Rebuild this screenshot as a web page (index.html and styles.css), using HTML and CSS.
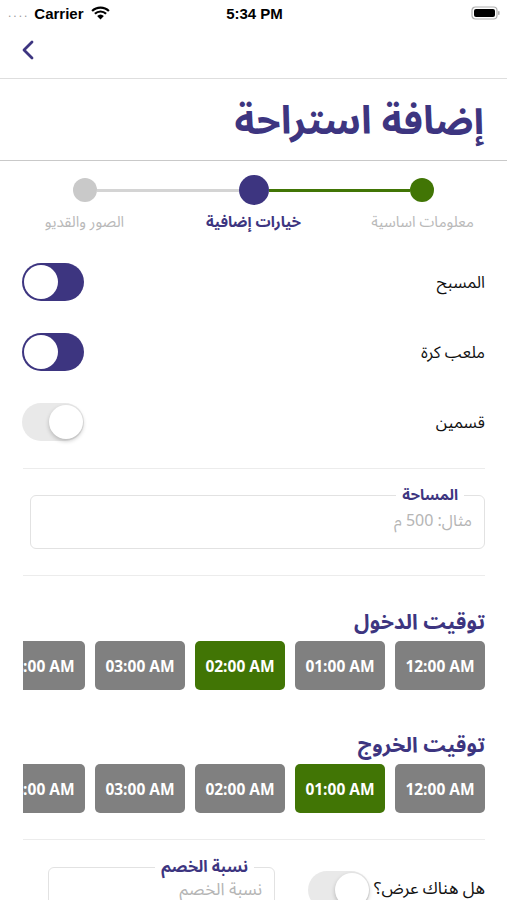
FILE: index.html
```html
<!DOCTYPE html>
<html lang="ar">
<head>
<meta charset="utf-8">
<link rel="stylesheet" href="styles.css">
</head>
<body>
<div class="screen">
  <div class="status">
    <div class="status-left">
      <span class="dots">....</span>
      <span class="carrier">Carrier</span>
      <svg class="wifi" width="20" height="14" viewBox="0 0 20 14"><path d="M10 13.5 L6.6 10 A5 5 0 0 1 13.4 10 Z" fill="#000"/><path d="M4.4 7.8 A8 8 0 0 1 15.6 7.8" stroke="#000" stroke-width="2.2" fill="none"/><path d="M1.6 5 A12 12 0 0 1 18.4 5" stroke="#000" stroke-width="2.2" fill="none"/></svg>
    </div>
    <div class="time">5:34 PM</div>
    <div class="status-right">
      <svg width="30" height="14" viewBox="0 0 30 14"><rect x="1" y="1" width="25" height="12" rx="3.5" fill="none" stroke="#b0b0b0" stroke-width="1.2"/><rect x="3" y="3" width="21" height="8" rx="2" fill="#000"/><rect x="27" y="5" width="1.6" height="4" rx="0.8" fill="#b0b0b0"/></svg>
    </div>
  </div>

  <div class="navbar">
    <svg class="back" width="14" height="20" viewBox="0 0 14 20"><path d="M11 2 L3 10 L11 18" stroke="#3d3580" stroke-width="2.8" fill="none" stroke-linecap="round" stroke-linejoin="round"/></svg>
  </div>

  <div class="title-block">
    <h1 class="title">إضافة استراحة</h1>
  </div>

  <div class="stepper">
    <div class="track">
      <span class="dot dot-gray"></span>
      <span class="line line-gray"></span>
      <span class="dot dot-active"></span>
      <span class="line line-green"></span>
      <span class="dot dot-green"></span>
    </div>
    <div class="step-labels">
      <span class="step-label">الصور والقديو</span>
      <span class="step-label current">خيارات إضافية</span>
      <span class="step-label">معلومات اساسية</span>
    </div>
  </div>

  <div class="content">
    <div class="toggle-row">
      <span class="toggle-label">المسبح</span>
      <span class="switch on"><span class="knob"></span></span>
    </div>
    <div class="toggle-row">
      <span class="toggle-label">ملعب كرة</span>
      <span class="switch on"><span class="knob"></span></span>
    </div>
    <div class="toggle-row">
      <span class="toggle-label">قسمين</span>
      <span class="switch off"><span class="knob"></span></span>
    </div>

    <hr class="sep sep-first">

    <fieldset class="field area">
      <legend>المساحة</legend>
      <span class="placeholder">مثال: 500 م</span>
    </fieldset>

    <hr class="sep sep-mid">

    <h2 class="section-title first">توقيت الدخول</h2>
    <div class="chips">
      <span class="chip">12:00 AM</span>
      <span class="chip">01:00 AM</span>
      <span class="chip selected">02:00 AM</span>
      <span class="chip">03:00 AM</span>
      <span class="chip">04:00 AM</span>
    </div>

    <h2 class="section-title second">توقيت الخروج</h2>
    <div class="chips">
      <span class="chip">12:00 AM</span>
      <span class="chip selected">01:00 AM</span>
      <span class="chip">02:00 AM</span>
      <span class="chip">03:00 AM</span>
      <span class="chip">04:00 AM</span>
    </div>

    <hr class="sep sep-last">

    <div class="offer-row">
      <span class="toggle-label offer-label">هل هناك عرض؟</span>
      <span class="switch off"><span class="knob"></span></span>
      <fieldset class="field discount">
        <legend>نسبة الخصم</legend>
        <span class="placeholder">نسبة الخصم</span>
      </fieldset>
    </div>
  </div>
</div>
</body>
</html>
```

FILE: styles.css
```css
* { box-sizing: border-box; }
html, body { margin: 0; padding: 0; background: #fff; }
body {
  font-family: "Noto Sans Arabic", "Noto Sans", "DejaVu Sans", sans-serif;
  color: #111;
}
.screen {
  width: 507px;
  height: 900px;
  overflow: hidden;
  direction: rtl;
}

/* status bar */
.status {
  direction: ltr;
  height: 26px;
  display: flex;
  align-items: center;
  justify-content: space-between;
  padding: 0 6px 0 8px;
  font-family: "Liberation Sans", "Noto Sans", sans-serif;
  font-size: 15px;
}
.status-left { display: flex; align-items: center; gap: 5px; width: 160px; }
.dots { color: #9a9a9a; font-size: 12px; letter-spacing: 2px; }
.carrier { font-weight: 600; color: #000; }
.wifi { margin-left: 1px; width: 21px; }
.time { font-weight: 600; color: #000; }
.status-right { width: 160px; display: flex; justify-content: flex-end; }

/* nav */
.navbar {
  direction: ltr;
  height: 53px;
  border-bottom: 1px solid #dedede;
  display: flex;
  align-items: center;
  padding-left: 21px;
  padding-bottom: 5px;
}

/* title */
.title-block {
  height: 82px;
  border-bottom: 1px solid #c9c9c9;
  display: flex;
  align-items: center;
  padding: 0 23px;
}
.title {
  margin: 0;
  font-size: 39px;
  font-weight: 700;
  color: #3d3580;
  line-height: 1;
  padding-top: 3px;
}

/* stepper */
.stepper { direction: ltr; padding-top: 14px; }
.track {
  display: flex;
  align-items: center;
  height: 30px;
  margin: 0 73px;
}
.dot { display: block; border-radius: 50%; flex: none; }
.dot-gray { width: 24px; height: 24px; background: #c9c9c9; }
.dot-green { width: 24px; height: 24px; background: #417505; }
.dot-active { width: 30px; height: 30px; background: #3d3580; }
.line { flex: 1; height: 3px; }
.line-gray { background: #d4d4d4; }
.line-green { background: #417505; }
.step-labels {
  display: grid;
  grid-template-columns: repeat(3, 169px);
  margin-top: 7px;
}
.step-label {
  text-align: center;
  font-size: 15px;
  line-height: 20px;
  color: #b9b9b9;
}
.step-label.current { color: #3d3580; font-weight: 700; }

/* content */
.content { padding: 15px 22px 0 22px; }
.toggle-row {
  height: 70px;
  display: flex;
  align-items: center;
  justify-content: space-between;
}
.toggle-label { font-size: 16.5px; color: #111; }

.switch {
  position: relative;
  display: block;
  width: 62px;
  height: 38px;
  border-radius: 19px;
  flex: none;
}
.switch .knob {
  position: absolute;
  top: 2px;
  width: 34px;
  height: 34px;
  border-radius: 50%;
  background: #fff;
}
.switch.on { background: #3d3580; }
.switch.on .knob { left: 2px; }
.switch.off { background: #e9e9e9; }
.switch.off .knob { right: 1px; box-shadow: 0 2px 4px rgba(0,0,0,0.22); }

.sep { border: 0; height: 1px; background: #ececec; margin: 0 0 0 1px; }
.sep-first { margin-top: 11px; }
.sep-mid { margin-top: 26px; }
.sep-last { margin-top: 26px; }

.field {
  margin: 0;
  border: 1px solid #e2e2e2;
  border-radius: 6px;
  padding: 0 12px;
  min-width: 0;
}
.field legend {
  font-size: 15px;
  font-weight: 700;
  color: #3d3580;
  padding: 0 6px;
  margin-right: 8px;
  line-height: 16px;
}
.placeholder {
  display: block;
  font-size: 16px;
  color: #b5b5b5;
  line-height: 22px;
}
.area {
  margin: 18px 0 0 8px;
  height: 62px;
}
.area .placeholder { margin-top: 7px; }

.section-title {
  margin: 0;
  font-size: 21px;
  font-weight: 700;
  color: #3d3580;
  line-height: 30px;
}
.section-title.first { margin-top: 31px; }
.section-title.second { margin-top: 40px; }

.chips {
  display: flex;
  gap: 10px;
  overflow: hidden;
  margin-top: 4px;
  margin-left: 1px;
}
.chip {
  flex: none;
  width: 90px;
  height: 49px;
  border-radius: 5px;
  background: #808080;
  color: #fff;
  font-family: "Open Sans", "Noto Sans", sans-serif;
  font-weight: 700;
  font-size: 15.5px;
  display: flex;
  align-items: center;
  justify-content: center;
  direction: ltr;
}
.chip.selected { background: #417505; }

.offer-row {
  display: flex;
  align-items: flex-start;
  margin-top: 19px;
}
.offer-label { margin-top: 17px; font-size: 17px; line-height: 26px; }
.offer-row .switch { margin-right: 4px; margin-top: 12px; }
.discount {
  width: 227px;
  height: 60px;
  margin-right: 33px;
  padding: 0 12px;
}
.discount legend { margin-right: 8px; font-size: 16px; }
.discount .placeholder { font-size: 17px; margin-top: 4px; }
```
